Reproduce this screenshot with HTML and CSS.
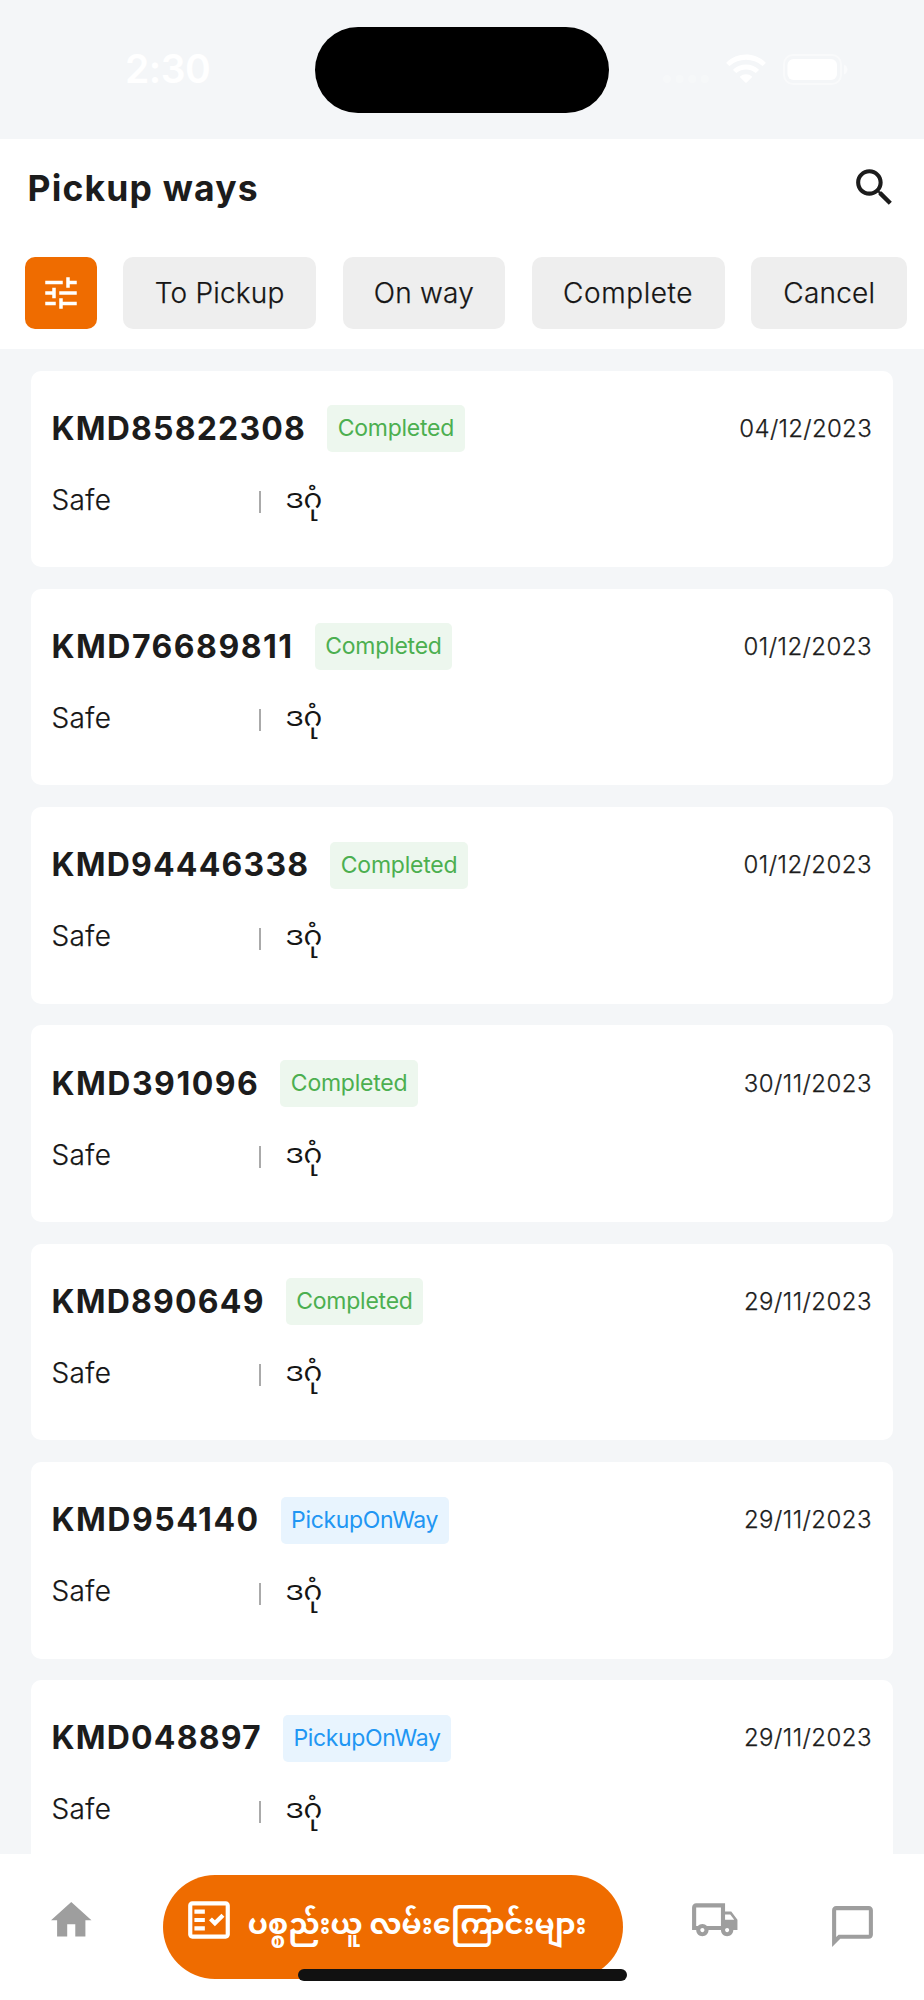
FILE: index.html
```html
<!DOCTYPE html>
<html lang="en">
<head>
<meta charset="utf-8">
<title>Pickup ways</title>
<link rel="stylesheet" href="styles.css">
</head>
<body>
<div class="status">
  <div class="time">2:30</div>
  <div class="island"></div>
  <div class="signals">
    <svg class="dots" viewBox="0 0 46 8"><circle cx="4" cy="4" r="4"/><circle cx="16.6" cy="4" r="4"/><circle cx="29.2" cy="4" r="4"/><circle cx="41.8" cy="4" r="4"/></svg>
    <svg class="wifi" viewBox="0 0 40 30"><path d="M20 0.5C27.5 .5 34.300 3.400 39.300 8.200Q39.900 8.900 39.300 9.500L37.200 11.600Q36.500 12.200 35.800 11.600C31.600 7.800 26.100 5.700 20 5.700S8.400 7.800 4.200 11.600Q3.500 12.200 2.800 11.600L.7 9.500Q.1 8.900.7 8.200C5.700 3.400 12.500.5 20 .5Z"/><path d="M20 10.500C24.800 10.500 29.200 12.300 32.500 15.200Q33.100 15.800 32.500 16.500L30.300 18.600Q29.600 19.200 28.900 18.600C26.500 16.700 23.400 15.600 20 15.600S13.500 16.700 11.100 18.600Q10.400 19.200 9.700 18.600L7.500 16.500Q6.900 15.800 7.500 15.200C10.800 12.300 15.200 10.500 20 10.500Z"/><path d="M20 20.300Q23.500 20.300 25.700 22.200Q26.300 22.800 25.700 23.500L20.700 28.400Q20 29 19.300 28.400L14.300 23.500Q13.700 22.800 14.300 22.200Q16.500 20.300 20 20.300Z"/></svg>
    <svg class="battery" viewBox="0 0 65 31"><rect class="shell" x="1" y="1" width="57" height="29" rx="9"/><rect x="4.500" y="5" width="49.500" height="21" rx="6"/><path class="nub" d="M61 10.500Q64.500 12 64.500 15.500Q64.500 19 61 20.500Z"/></svg>
  </div>
</div>

<header class="header">
  <div class="titlebar">
    <h1 class="title">Pickup ways</h1>
    <svg class="search" viewBox="0 0 24 24"><path d="M15.500 14h-.79l-.28-.27C15.410 12.590 16 11.110 16 9.500 16 5.910 13.090 3 9.500 3S3 5.910 3 9.500 5.910 16 9.500 16c1.610 0 3.090-.59 4.230-1.570l.27.28v.79l5 4.990L20.490 19l-4.990-5zm-6 0C7.010 14 5 11.990 5 9.500S7.010 5 9.500 5 14 7.010 14 9.500 11.990 14 9.500 14z"/></svg>
  </div>
  <div class="chips">
    <button class="filter"><svg viewBox="0 0 24 24"><path d="M3 17v2h6v-2H3zM3 5v2h10V5H3zm10 16v-2h8v-2h-8v-2h-2v6h2zM7 9v2H3v2h4v2h2V9H7zm14 4v-2H11v2h10zm-6-4h2V7h4V5h-4V3h-2v6z"/></svg></button>
    <button class="chip">To Pickup</button>
    <button class="chip">On way</button>
    <button class="chip wide">Complete</button>
    <button class="chip">Cancel</button>
  </div>
</header>

<main class="list">
  <article class="card">
    <div class="top"><span class="code">KMD85822308</span><span class="badge done">Completed</span><time class="date">04/12/2023</time></div>
    <div class="info"><span class="name">Safe</span><i class="bar"></i><span class="town">ဒဂုံ</span></div>
  </article>
  <article class="card">
    <div class="top"><span class="code loose">KMD76689811</span><span class="badge done">Completed</span><time class="date">01/12/2023</time></div>
    <div class="info"><span class="name">Safe</span><i class="bar"></i><span class="town">ဒဂုံ</span></div>
  </article>
  <article class="card">
    <div class="top"><span class="code">KMD94446338</span><span class="badge done">Completed</span><time class="date">01/12/2023</time></div>
    <div class="info"><span class="name">Safe</span><i class="bar"></i><span class="town">ဒဂုံ</span></div>
  </article>
  <article class="card">
    <div class="top"><span class="code loose">KMD391096</span><span class="badge done">Completed</span><time class="date">30/11/2023</time></div>
    <div class="info"><span class="name">Safe</span><i class="bar"></i><span class="town">ဒဂုံ</span></div>
  </article>
  <article class="card">
    <div class="top"><span class="code">KMD890649</span><span class="badge done">Completed</span><time class="date">29/11/2023</time></div>
    <div class="info"><span class="name">Safe</span><i class="bar"></i><span class="town">ဒဂုံ</span></div>
  </article>
  <article class="card">
    <div class="top"><span class="code loose">KMD954140</span><span class="badge onway">PickupOnWay</span><time class="date">29/11/2023</time></div>
    <div class="info"><span class="name">Safe</span><i class="bar"></i><span class="town">ဒဂုံ</span></div>
  </article>
  <article class="card">
    <div class="top"><span class="code">KMD048897</span><span class="badge onway">PickupOnWay</span><time class="date">29/11/2023</time></div>
    <div class="info"><span class="name">Safe</span><i class="bar"></i><span class="town">ဒဂုံ</span></div>
  </article>
</main>

<nav class="nav">
  <svg class="home" viewBox="0 0 24 24"><path d="M10 20v-6h4v6h5v-8h3L12 3 2 12h3v8z"/></svg>
  <div class="active">
    <svg class="check" viewBox="0 0 24 24"><path fill-rule="evenodd" d="M20 3H4c-1.100 0-2 .9-2 2v14c0 1.100.9 2 2 2h16c1.100 0 2-.9 2-2V5c0-1.100-.9-2-2-2zm0 16H4V5h16v14z"/><path d="M19.410 10.420L17.990 9l-3.170 3.170-1.410-1.420L12 12.160 14.820 15zM5 7h5v2H5zM5 11h5v2H5zM5 15h5v2H5z"/></svg>
    <span class="label">ပစ္စည်းယူ လမ်းကြောင်းများ</span>
  </div>
  <svg class="truck" viewBox="0 0 24 24"><path d="M20 8h-3V4H3c-1.100 0-2 .9-2 2v11h2c0 1.660 1.340 3 3 3s3-1.340 3-3h6c0 1.660 1.340 3 3 3s3-1.340 3-3h2v-5l-3-4zm-.5 1.500l1.960 2.500H17V9.500h2.500zM6 18c-.55 0-1-.45-1-1s.45-1 1-1 1 .45 1 1-.45 1-1 1zm2.220-3c-.55-.61-1.330-1-2.220-1s-1.670.39-2.220 1H3V6h12v9H8.220zM18 18c-.55 0-1-.45-1-1s.45-1 1-1 1 .45 1 1-.45 1-1 1z"/></svg>
  <svg class="chat" viewBox="0 0 24 24"><path d="M20 2H4c-1.100 0-2 .9-2 2v18l4-4h14c1.100 0 2-.9 2-2V4c0-1.100-.9-2-2-2zm0 14H5.170L4 17.170V4h16v12z"/></svg>
  <div class="homebar"></div>
</nav>
</body>
</html>
```
FILE: styles.css
```css
* { box-sizing: border-box; }

body {
  margin: 0;
  width: 924px;
  height: 2000px;
  display: flex;
  flex-direction: column;
  overflow: hidden;
  background: #f4f6f8;
  color: #1c1c1c;
  font-family: Inter, "Noto Sans Myanmar", sans-serif;
}

svg { display: block; flex: none; }

/* Status bar */
.status {
  flex: none;
  height: 138.500px;
  display: grid;
  grid-template-columns: 315px 294px 315px;
  align-items: center;
  color: #fff;
}
.time {
  padding-left: 125px;
  font-size: 39px;
  font-weight: 600;
  letter-spacing: -0.500px;
  line-height: 48px;
}
.island {
  height: 86px;
  margin-top: 1px;
  border-radius: 44px;
  background: #000;
}
.signals {
  display: flex;
  align-items: center;
  padding-left: 54px;
  fill: #fff;
}
.dots { width: 46px; height: 8px; margin: 20px 17px 0 0; opacity: .25; }
.wifi { width: 40px; height: 30px; margin-right: 17px; }
.battery { width: 65px; height: 31px; }
.shell { fill: none; stroke: #fff; stroke-width: 2; opacity: .45; }
.nub { opacity: .5; }

/* Header */
.header {
  flex: none;
  height: 210.500px;
  background: #fff;
}
.titlebar {
  height: 99px;
  display: flex;
  align-items: center;
  justify-content: space-between;
  padding: 0 25px 0 27.500px;
}
.title {
  margin: 2px 0 0;
  font-size: 35.500px;
  font-weight: 700;
  letter-spacing: 1.180px;
  line-height: 44px;
}
.search { width: 49px; height: 49px; margin-bottom: 2px; fill: #1c1c1c; }
.chips {
  display: grid;
  grid-template-columns: 72px 193px 162px 193px 156px;
  gap: 26.700px;
  padding: 19.300px 0 0 24.500px;
}
.filter, .chip {
  height: 72px;
  padding: 0;
  border: 0;
  border-radius: 10px;
  display: flex;
  align-items: center;
  justify-content: center;
}
.filter { background: #ef6c00; }
.filter svg { width: 42px; height: 42px; fill: #fff; }
.chip {
  background: #eee;
  color: #151515;
  font: 300 28px/36px Inter, sans-serif;
  letter-spacing: .2px;
  -webkit-text-stroke: .25px currentColor;
}
.chip.wide { letter-spacing: .6px; }

/* Pickup list */
.list {
  flex: 1;
  min-height: 0;
  overflow: hidden;
  display: flex;
  flex-direction: column;
  gap: 21.650px;
  padding: 21.500px 31px 0;
}
.card {
  flex: none;
  height: 196.650px;
  padding: 34.700px 21px 0 20.500px;
  border-radius: 10px;
  background: #fff;
}
.top {
  height: 47px;
  display: flex;
  align-items: center;
}
.code {
  font-size: 32px;
  font-weight: 700;
  letter-spacing: 1.200px;
  line-height: 40px;
}
.code.loose { letter-spacing: 1.500px; }
.badge {
  height: 47px;
  margin-left: 21px;
  padding: 0 10.500px;
  border-radius: 5px;
  font-size: 23px;
  line-height: 46.500px;
}
.done { background: #edf7ee; color: #4caf50; letter-spacing: -.23px; }
.onway { background: #e8f4fe; color: #2196f3; letter-spacing: -.33px; }
.date {
  margin-left: auto;
  font-size: 24px;
  font-weight: 300;
  letter-spacing: .450px;
  line-height: 46px;
  -webkit-text-stroke: .25px currentColor;
}
.card:first-child .date { letter-spacing: .300px; }
.info {
  display: flex;
  align-items: center;
  height: 40px;
  margin-top: 27.500px;
  color: #151515;
  font-size: 28px;
  line-height: 40px;
}
.name {
  width: 207.500px;
  font-weight: 300;
  letter-spacing: .4px;
  -webkit-text-stroke: .25px currentColor;
}
.bar { width: 2px; height: 22px; margin: 5px 25px 0 0; background: #aaa; }
.town { margin: -3px 0 0 -.5px; }

/* Bottom navigation */
.nav {
  position: relative;
  flex: none;
  height: 146px;
  display: flex;
  align-items: flex-start;
  background: #fff;
  fill: #9e9e9e;
}
.home { width: 48.500px; height: 48.500px; margin: 41.500px 0 0 47.300px; }
.active {
  width: 460px;
  height: 104.500px;
  margin: 20.700px 0 0 67.500px;
  padding-left: 20.500px;
  display: flex;
  border-radius: 53px;
  background: #ef6c00;
  color: #fff;
  fill: #fff;
}
.check { width: 50px; height: 50px; margin-top: 20px; }
.label {
  margin: 27.500px 0 0 14px;
  font-size: 28.900px;
  font-weight: 700;
  line-height: 44px;
  white-space: nowrap;
}
.truck { width: 49.500px; height: 49.500px; margin: 41px 0 0 67px; }
.chat { width: 49px; height: 49px; margin: 48.300px 0 0 88.200px; }
.homebar {
  position: absolute;
  left: 298px;
  top: 115.300px;
  width: 329px;
  height: 11.500px;
  border-radius: 6px;
  background: #111;
}
```
